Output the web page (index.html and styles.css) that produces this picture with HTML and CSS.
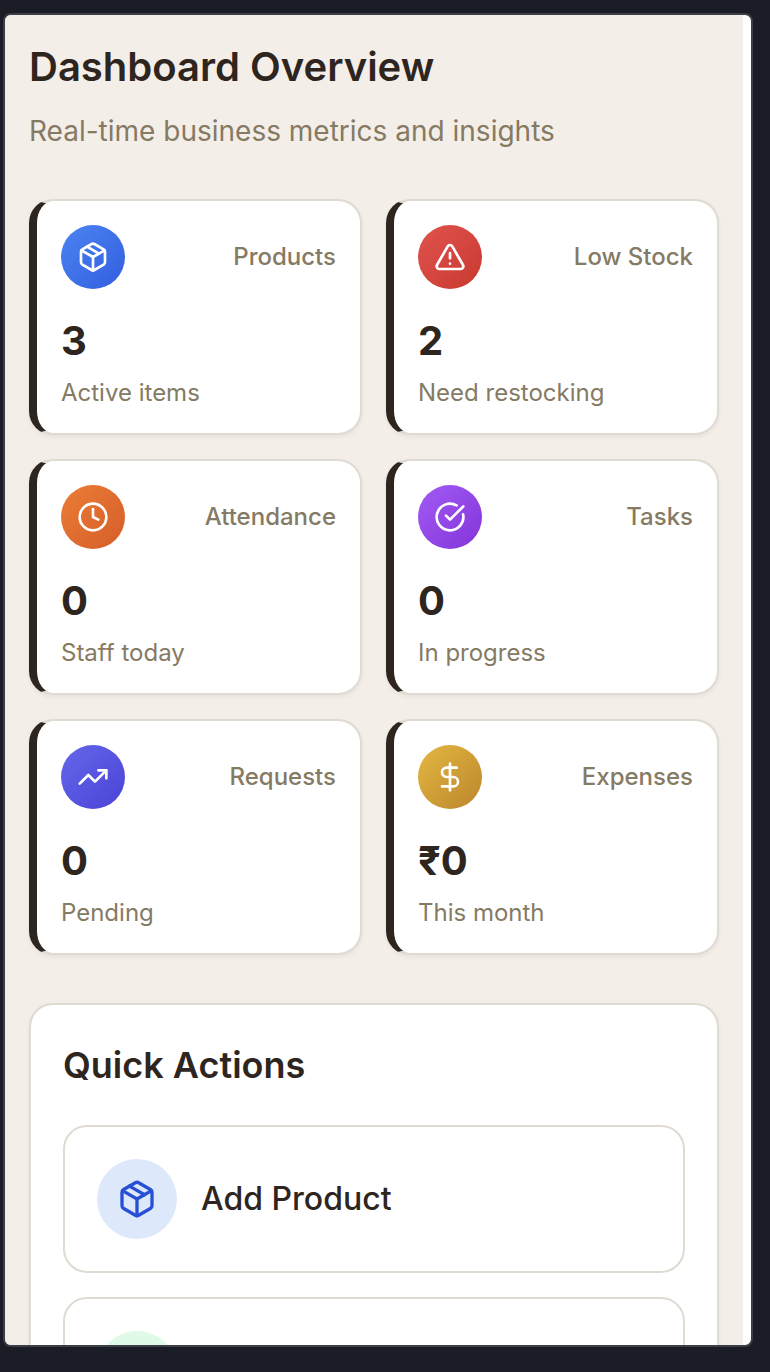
FILE: index.html
```html
<!DOCTYPE html>
<html lang="en">
<head>
<meta charset="utf-8">
<meta name="viewport" content="width=device-width, initial-scale=1">
<title>Dashboard Overview</title>
<link rel="stylesheet" href="styles.css">
</head>
<body>
<svg class="sprite" aria-hidden="true">
  <symbol id="package" viewBox="0 0 24 24"><path d="m7.5 4.27 9 5.15"/><path d="M21 8a2 2 0 0 0-1-1.73l-7-4a2 2 0 0 0-2 0l-7 4A2 2 0 0 0 3 8v8a2 2 0 0 0 1 1.73l7 4a2 2 0 0 0 2 0l7-4A2 2 0 0 0 21 16Z"/><path d="m3.3 7 8.7 5 8.7-5"/><path d="M12 22V12"/></symbol>
  <symbol id="alert" viewBox="0 0 24 24"><path d="m21.73 18-8-14a2 2 0 0 0-3.48 0l-8 14A2 2 0 0 0 4 21h16a2 2 0 0 0 1.73-3Z"/><path d="M12 9v4"/><path d="M12 17h.01"/></symbol>
  <symbol id="clock" viewBox="0 0 24 24"><circle cx="12" cy="12" r="10"/><path d="M12 6v6l4 2"/></symbol>
  <symbol id="check" viewBox="0 0 24 24"><path d="M21.801 10A10 10 0 1 1 17 3.335"/><path d="m9 11 3 3L22 4"/></symbol>
  <symbol id="trend" viewBox="0 0 24 24"><path d="M22 7 13.5 15.5 8.5 10.5 2 17"/><path d="M16 7h6v6"/></symbol>
  <symbol id="dollar" viewBox="0 0 24 24"><path d="M12 2v20"/><path d="M17 5H9.5a3.5 3.5 0 0 0 0 7h5a3.5 3.5 0 0 1 0 7H6"/></symbol>
</svg>
<div class="frame">
  <main class="page">
    <header class="page-header">
      <h1 class="title">Dashboard Overview</h1>
      <p class="subtitle">Real-time business metrics and insights</p>
    </header>
    <section class="stats">
      <article class="stat">
        <div class="stat-top"><span class="stat-icon blue"><svg class="icon"><use href="#package"/></svg></span><h2 class="stat-label">Products</h2></div>
        <p class="stat-value">3</p>
        <p class="stat-note">Active items</p>
      </article>
      <article class="stat">
        <div class="stat-top"><span class="stat-icon red"><svg class="icon"><use href="#alert"/></svg></span><h2 class="stat-label">Low Stock</h2></div>
        <p class="stat-value">2</p>
        <p class="stat-note">Need restocking</p>
      </article>
      <article class="stat">
        <div class="stat-top"><span class="stat-icon orange"><svg class="icon"><use href="#clock"/></svg></span><h2 class="stat-label">Attendance</h2></div>
        <p class="stat-value">0</p>
        <p class="stat-note">Staff today</p>
      </article>
      <article class="stat">
        <div class="stat-top"><span class="stat-icon purple"><svg class="icon"><use href="#check"/></svg></span><h2 class="stat-label">Tasks</h2></div>
        <p class="stat-value">0</p>
        <p class="stat-note">In progress</p>
      </article>
      <article class="stat">
        <div class="stat-top"><span class="stat-icon indigo"><svg class="icon"><use href="#trend"/></svg></span><h2 class="stat-label">Requests</h2></div>
        <p class="stat-value">0</p>
        <p class="stat-note">Pending</p>
      </article>
      <article class="stat">
        <div class="stat-top"><span class="stat-icon gold"><svg class="icon"><use href="#dollar"/></svg></span><h2 class="stat-label">Expenses</h2></div>
        <p class="stat-value">₹0</p>
        <p class="stat-note">This month</p>
      </article>
    </section>
    <section class="actions">
      <h2 class="actions-title">Quick Actions</h2>
      <div class="actions-list">
        <button class="action" type="button"><span class="action-icon sky"><svg class="icon"><use href="#package"/></svg></span>Add Product</button>
        <button class="action" type="button"><span class="action-icon mint"></span></button>
      </div>
    </section>
  </main>
</div>
</body>
</html>
```

FILE: styles.css
```css
* {
  box-sizing: border-box;
}

body {
  height: 100vh;
  margin: 0;
  padding: 13px 17px 25px 3px;
  background: #1a1d25;
  color: #2e251f;
  font-family: Inter, "Liberation Sans", sans-serif;
}

h1, h2, p {
  margin: 0;
}

.sprite {
  display: none;
}

.frame {
  height: 100%;
  padding-right: 8px;
  overflow: hidden;
  background: #fff;
  border: 2px solid #3b3d47;
  border-radius: 8px;
}

.page {
  padding: 24px;
  background: #f4eee8;
}

.page-header {
  margin-bottom: 48px;
}

.title {
  margin-bottom: 16px;
  font-size: 40px;
  font-weight: 600;
  line-height: 56px;
}

.subtitle {
  color: #857a63;
  font-size: 28px;
  line-height: 40px;
}

.stats {
  display: grid;
  grid-template-columns: 1fr 1fr;
  gap: 24px;
  margin-bottom: 48px;
}

.stat {
  padding: 24px;
  background: #fff;
  border: 2px solid #dfdbd2;
  border-left: 8px solid #2e251f;
  border-radius: 24px;
  box-shadow: 0 2px 4px rgba(46, 37, 31, 0.06);
}

.stat-top {
  display: flex;
  align-items: center;
  justify-content: space-between;
  margin-bottom: 24px;
}

.stat-icon,
.action-icon {
  display: flex;
  flex: none;
  align-items: center;
  justify-content: center;
  border-radius: 50%;
}

.stat-icon {
  width: 64px;
  height: 64px;
  color: #fff;
}

.icon {
  width: 32px;
  height: 32px;
  fill: none;
  stroke: currentColor;
  stroke-width: 2;
  stroke-linecap: round;
  stroke-linejoin: round;
}

.blue { background: linear-gradient(135deg, #4b84f0, #335ee0); }
.red { background: linear-gradient(135deg, #e0544e, #c8382f); }
.orange { background: linear-gradient(135deg, #ea7d36, #d65d29); }
.purple { background: linear-gradient(135deg, #a15bf3, #8434da); }
.indigo { background: linear-gradient(135deg, #6467ea, #4b43d6); }
.gold { background: linear-gradient(135deg, #e3b741, #bc862d); }

.stat-label {
  color: #857a63;
  font-size: 24px;
  font-weight: 500;
  line-height: 32px;
}

.stat-value {
  margin-bottom: 8px;
  font-size: 40px;
  font-weight: 700;
  line-height: 56px;
}

.stat-note {
  color: #857a63;
  font-size: 24px;
  line-height: 32px;
}

.actions {
  padding: 32px;
  background: #fff;
  border: 2px solid #dfdbd2;
  border-radius: 24px;
  box-shadow: 0 2px 4px rgba(46, 37, 31, 0.06);
}

.actions-title {
  margin-bottom: 32px;
  font-size: 36px;
  font-weight: 600;
  line-height: 56px;
}

.actions-list {
  display: grid;
  gap: 24px;
}

.action {
  display: flex;
  align-items: center;
  gap: 24px;
  width: 100%;
  padding: 32px;
  background: #fff;
  border: 2px solid #dfdbd2;
  border-radius: 24px;
  color: inherit;
  font: inherit;
  font-size: 32px;
  font-weight: 500;
  line-height: 48px;
  text-align: left;
}

.action-icon {
  width: 80px;
  height: 80px;
}

.action-icon .icon {
  width: 40px;
  height: 40px;
}

.sky {
  background: #dde8fb;
  color: #2850d4;
}

.mint {
  background: #e0fae8;
}
```
